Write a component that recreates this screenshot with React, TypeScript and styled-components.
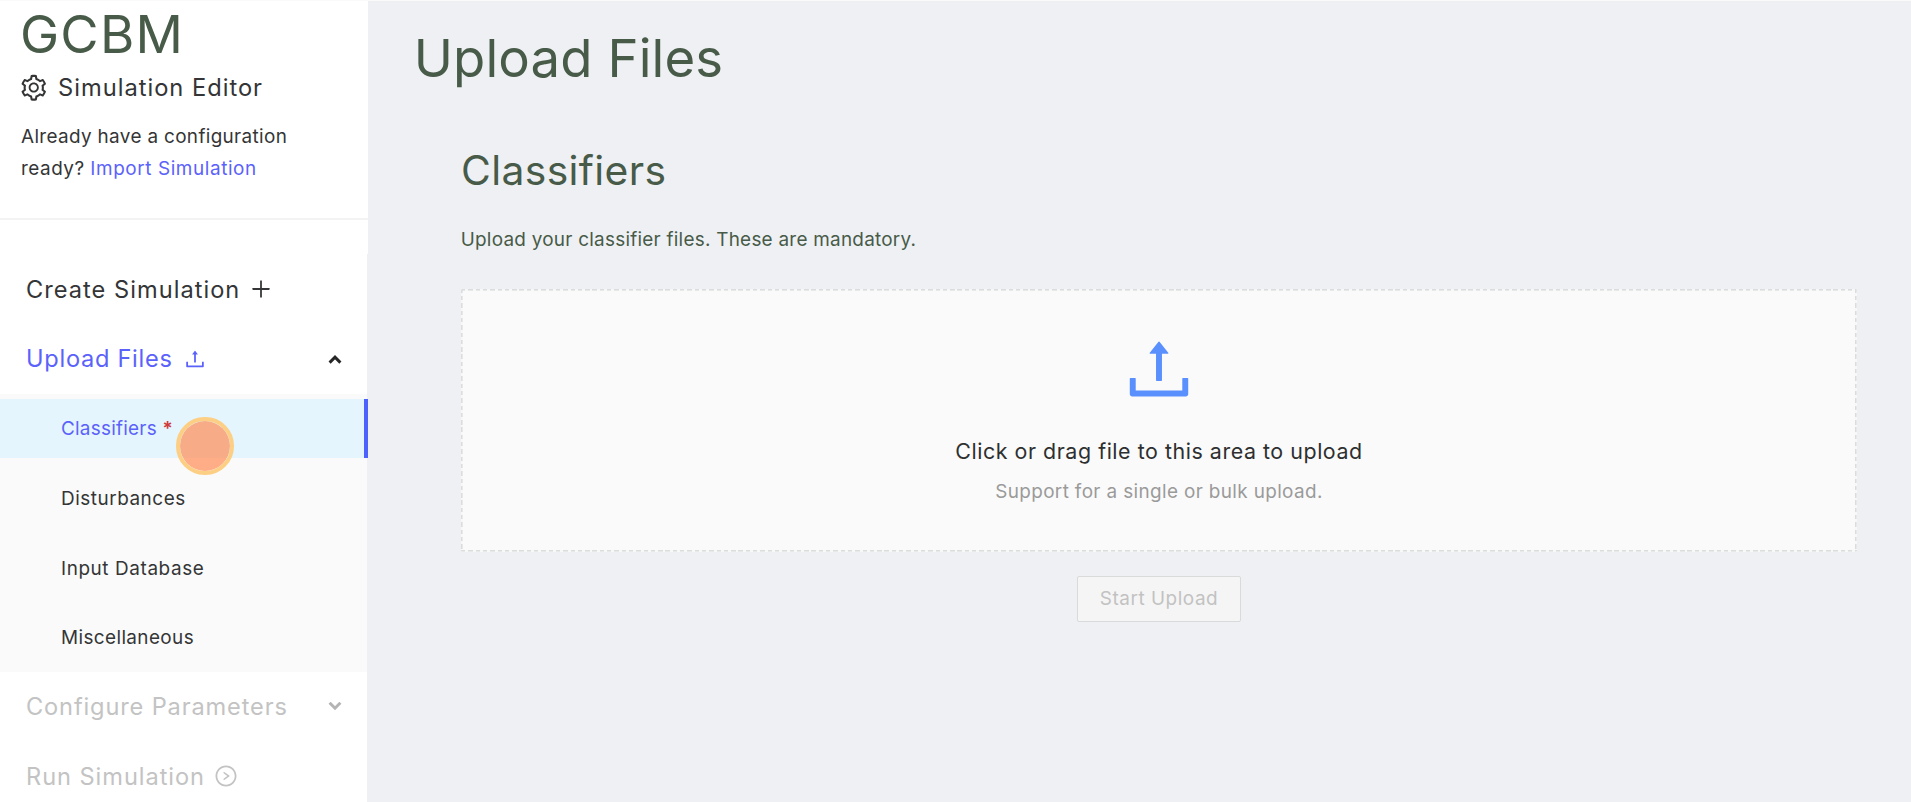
import React from 'react';
import styled, { createGlobalStyle } from 'styled-components';
import {
  AiOutlinePlus,
  AiOutlineRightCircle,
  AiOutlineSetting,
  AiOutlineUpload,
} from 'react-icons/ai';

const GlobalStyle = createGlobalStyle`
  * { box-sizing: border-box; }
  body {
    margin: 0;
    font-family: Inter, 'Liberation Sans', sans-serif;
    color: #343536;
  }
  h1, h2, p { margin: 0; font-weight: 400; }
`;

const Page = styled.div`
  display: flex;
  height: 802px;
  overflow: hidden;
  background: #eff0f4;
  border-top: 1px solid #fafafb;
`;

const Sidebar = styled.aside`
  flex: none;
  width: 368.3px;
  display: flex;
  flex-direction: column;
`;

const Brand = styled.header`
  height: 253.4px;
  flex: none;
  background: #fff;
`;

const BrandInner = styled.div`
  height: 219px;
  padding: 3px 20px 0 21px;
  border-bottom: 2px solid #f3f3f3;
`;

const BrandName = styled.h1`
  font-size: 52.5px;
  line-height: 60px;
  letter-spacing: 1.2px;
  margin-left: -1px;
  color: #475b48;
`;

const BrandSub = styled.div`
  display: flex;
  align-items: center;
  gap: 9.5px;
  height: 40px;
  margin-top: 4px;
  margin-left: -2px;
  font-size: 23.7px;
  letter-spacing: 0.99px;
  white-space: nowrap;
`;

const SubLabel = styled.span`
  margin-top: -1.5px;
`;

const BrandNote = styled.p`
  margin-top: 13px;
  font-size: 18.9px;
  line-height: 31.7px;
  letter-spacing: 0.35px;
  white-space: nowrap;
`;

const Link = styled.a`
  color: #5b62fb;
  letter-spacing: 0.6px;
`;

const Tight = styled.span`
  letter-spacing: 0.52px;
`;

const Menu = styled.nav`
  flex: 1;
  width: 367px;
  background: #fff;
`;

const MenuItem = styled.div<{ $tone?: 'active' | 'disabled'; $spacing: number; $gap?: number }>`
  display: flex;
  align-items: center;
  height: 69.6px;
  padding: 0 25px 0 26px;
  font-size: 23.6px;
  letter-spacing: ${(p) => p.$spacing}px;
  white-space: nowrap;
  color: ${(p) =>
    p.$tone === 'active' ? '#5b62fb' : p.$tone === 'disabled' ? '#c3c3c3' : '#343536'};
  & > svg:first-of-type { margin-left: ${(p) => p.$gap ?? 9}px; flex: none; }
`;

const Arrow = styled.span<{ $color: string }>`
  display: flex;
  margin-left: auto;
  color: ${(p) => p.$color};
`;

const SubMenu = styled.div`
  background: #fafafa;
`;

const SubItem = styled.div<{ $selected?: boolean; $spacing: number }>`
  display: flex;
  align-items: center;
  height: 69.6px;
  padding: 1px 0 0 61px;
  font-size: 18.9px;
  letter-spacing: ${(p) => p.$spacing}px;
  ${(p) =>
    p.$selected &&
    `
    height: 58.4px;
    margin: 0 -1.4px 5.6px 0;
    color: #5b62fb;
    background: #e5f5fe;
    border-right: 4px solid #4c62fc;
  `}
`;

const SubMenuTop = styled.div`
  height: 5.6px;
`;

const Required = styled.span`
  margin-left: 5.5px;
  font-weight: 600;
  color: #cf3a3a;
`;

const Pointer = styled.span`
  position: absolute;
  left: 176.3px;
  top: 417.3px;
  width: 57.4px;
  height: 57.4px;
  border-radius: 50%;
  border: 4.6px solid #fccf85;
  background: rgba(255, 140, 84, 0.7);
  background-clip: padding-box;
`;

const Content = styled.main`
  flex: 1;
  padding: 20px 54px 0 45.5px;
  color: #475b48;
`;

const Title = styled.h1`
  font-size: 52.7px;
  line-height: 74px;
  letter-spacing: 0.1px;
`;

const Section = styled.section`
  margin-left: 47.2px;
  padding-top: 44px;
`;

const SectionTitle = styled.h2`
  font-size: 40.8px;
  line-height: 62px;
  letter-spacing: 0.38px;
`;

const Description = styled.p`
  margin-top: 23px;
  margin-left: -0.3px;
  font-size: 18.9px;
  line-height: 32px;
  letter-spacing: 0.26px;
`;

/* Dashed outline with a fixed 7.3px rhythm on all four sides. */
const DropZone = styled.div`
  --dash: #dadddb 0 4.4px, #f6f7f8 4.4px 7.3px;
  display: flex;
  flex-direction: column;
  align-items: center;
  height: 262.5px;
  margin-top: 33px;
  padding-top: 40px;
  border-radius: 2px;
  background:
    repeating-linear-gradient(90deg, var(--dash)) top / 100% 1.6px no-repeat,
    repeating-linear-gradient(90deg, var(--dash)) bottom / 100% 1.6px no-repeat,
    repeating-linear-gradient(180deg, var(--dash)) left / 1.6px 100% no-repeat,
    repeating-linear-gradient(180deg, var(--dash)) right / 1.6px 100% no-repeat,
    #fafafa;
`;

const DropTitle = styled.p`
  margin-top: 25px;
  font-size: 21.4px;
  line-height: 34px;
  letter-spacing: 0.55px;
  color: #2e2f30;
`;

const DropHint = styled.p`
  margin-top: 9px;
  font-size: 18.9px;
  line-height: 30px;
  letter-spacing: 0.37px;
  color: #9a9a9a;
`;

const StartButton = styled.button`
  display: block;
  width: 164px;
  height: 46px;
  margin: 24px auto 0;
  padding: 0;
  font: inherit;
  font-size: 18.9px;
  letter-spacing: 0.55px;
  color: #c2c2c2;
  background: #f5f5f5;
  border: 1.4px solid #d9dbda;
  border-radius: 2px;
`;

const Chevron = ({ up }: { up?: boolean }) => (
  <svg width="14" height="10" viewBox="0 0 14 10" fill="none" stroke="currentColor" strokeWidth="3">
    <path d={up ? 'M1.6 8.6 7 3.2l5.4 5.4' : 'M1.6 0.8 7 6.2l5.4-5.4'} />
  </svg>
);

export default function App() {
  return (
    <Page>
      <GlobalStyle />
      <Sidebar>
        <Brand>
          <BrandInner>
            <BrandName>GCBM</BrandName>
            <BrandSub>
              <AiOutlineSetting size={29.5} />
              <SubLabel>Simulation Editor</SubLabel>
            </BrandSub>
            <BrandNote>
              Already have a configuration
              <br />
              <Tight>ready?</Tight> <Link>Import Simulation</Link>
            </BrandNote>
          </BrandInner>
        </Brand>
        <Menu>
          <MenuItem $spacing={1.03}>
            Create Simulation
            <AiOutlinePlus size={24} />
          </MenuItem>
          <MenuItem $tone="active" $spacing={0.72} $gap={10}>
            Upload Files
            <AiOutlineUpload size={24} />
            <Arrow $color="#262626">
              <Chevron up />
            </Arrow>
          </MenuItem>
          <SubMenu>
            <SubMenuTop />
            <SubItem $selected $spacing={0.25}>
              Classifiers<Required>*</Required>
            </SubItem>
            <SubItem $spacing={0.54}>Disturbances</SubItem>
            <SubItem $spacing={0.6}>Input Database</SubItem>
            <SubItem $spacing={0.4}>Miscellaneous</SubItem>
          </SubMenu>
          <MenuItem $tone="disabled" $spacing={0.86}>
            Configure Parameters
            <Arrow $color="#b4b4b4">
              <Chevron />
            </Arrow>
          </MenuItem>
          <MenuItem $tone="disabled" $spacing={0.95} $gap={9.5}>
            Run Simulation
            <AiOutlineRightCircle size={24} />
          </MenuItem>
        </Menu>
      </Sidebar>
      <Content>
        <Title>Upload Files</Title>
        <Section>
          <SectionTitle>Classifiers</SectionTitle>
          <Description>Upload your classifier files. These are mandatory.</Description>
          <DropZone>
            <AiOutlineUpload size={80} color="#5a90fe" />
            <DropTitle>Click or drag file to this area to upload</DropTitle>
            <DropHint>Support for a single or bulk upload.</DropHint>
          </DropZone>
          <StartButton disabled>Start Upload</StartButton>
        </Section>
      </Content>
      <Pointer />
    </Page>
  );
}
